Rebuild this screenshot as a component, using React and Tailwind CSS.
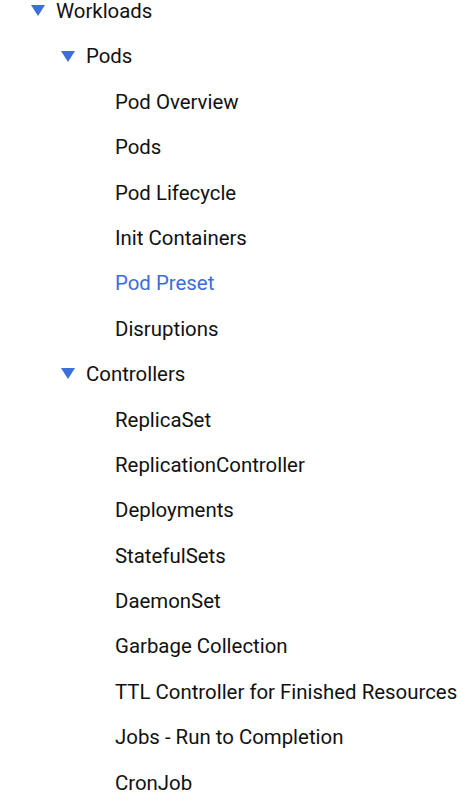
import React from 'react';

const rows = [
  { label: 'Workloads', depth: 0, open: true },
  { label: 'Pods', depth: 1, open: true },
  { label: 'Pod Overview', depth: 2 },
  { label: 'Pods', depth: 2 },
  { label: 'Pod Lifecycle', depth: 2 },
  { label: 'Init Containers', depth: 2 },
  { label: 'Pod Preset', depth: 2, active: true },
  { label: 'Disruptions', depth: 2 },
  { label: 'Controllers', depth: 1, open: true },
  { label: 'ReplicaSet', depth: 2 },
  { label: 'ReplicationController', depth: 2 },
  { label: 'Deployments', depth: 2 },
  { label: 'StatefulSets', depth: 2 },
  { label: 'DaemonSet', depth: 2 },
  { label: 'Garbage Collection', depth: 2 },
  { label: 'TTL Controller for Finished Resources', depth: 2 },
  { label: 'Jobs - Run to Completion', depth: 2 },
  { label: 'CronJob', depth: 2 },
];

const Caret = () => (
  <svg width="14" height="12" viewBox="0 0 14 12" className="shrink-0">
    <polygon points="0,0 14,0 7,11" fill="#3b6fdc" />
  </svg>
);

export default function App() {
  return (
    <div
      className="bg-white w-[474px] h-[810px] overflow-hidden"
      style={{ fontFamily: 'Roboto, "Liberation Sans", sans-serif' }}
    >
      <ul className="-mt-[11.4px]">
        {rows.map((r, i) => (
          <li
            key={i}
            className={
              'h-[45.4px] flex items-center text-[20.4px] whitespace-nowrap ' +
              (r.depth === 0 ? 'pl-[31px]' : r.depth === 1 ? 'pl-[61px]' : 'pl-[115px]')
            }
          >
            {r.open && (
              <span className="mr-[11px] flex items-center">
                <Caret />
              </span>
            )}
            <span className={r.active ? 'text-[#3d6dd8]' : 'text-[#111111]'}>{r.label}</span>
          </li>
        ))}
      </ul>
    </div>
  );
}
